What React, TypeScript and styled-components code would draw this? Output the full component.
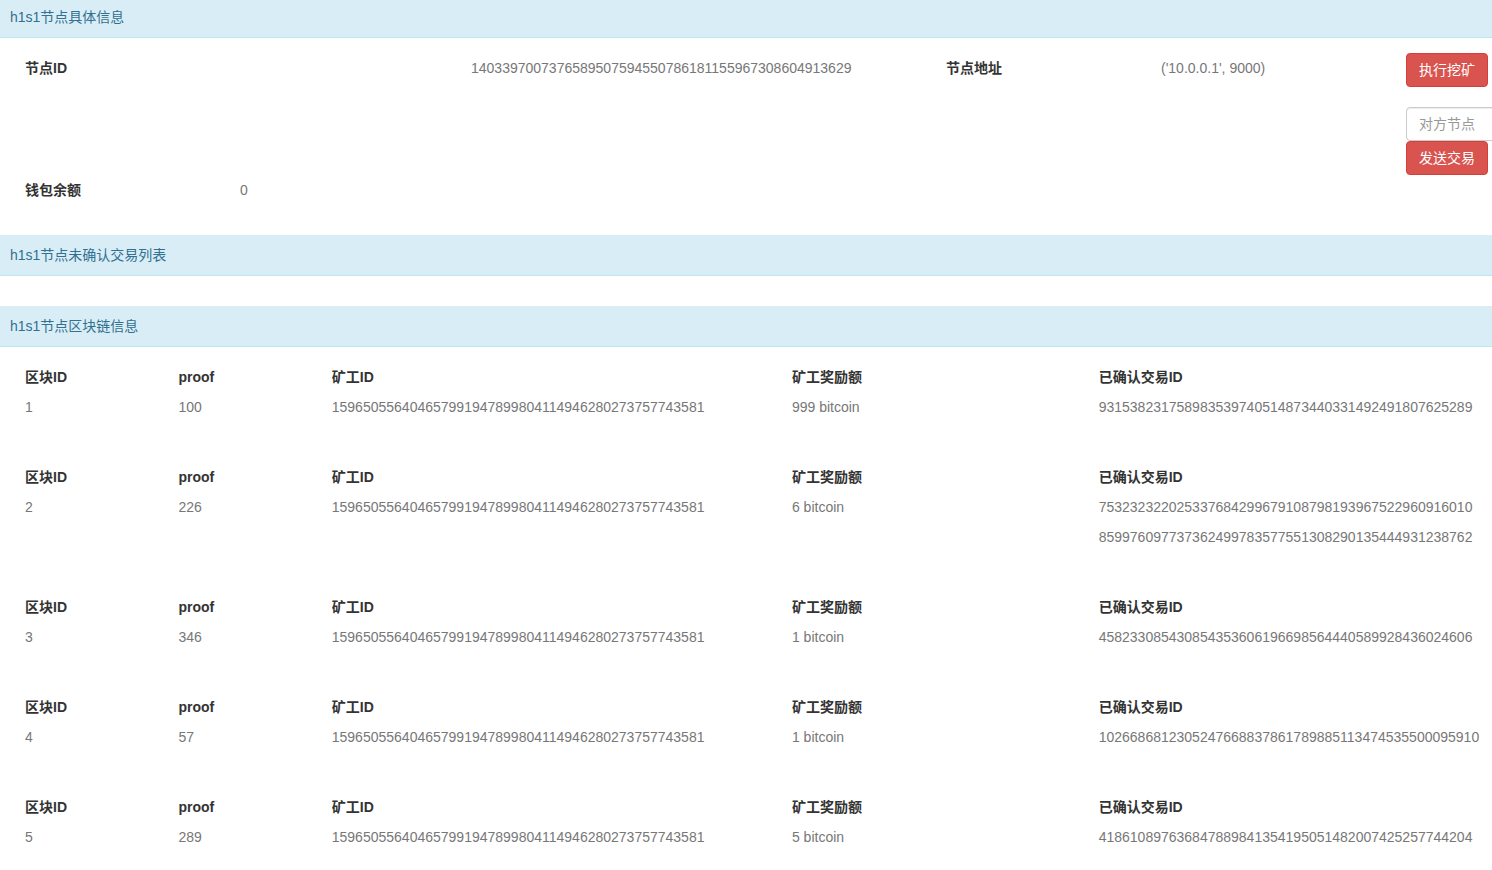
import React from "react";
import styled, { createGlobalStyle } from "styled-components";

const GlobalStyle = createGlobalStyle`
  * {
    box-sizing: border-box;
  }
  body {
    margin: 0;
    overflow-x: hidden;
    background: #fff;
    color: #333;
    font: 14px/20px "Liberation Sans", "Noto Sans CJK SC", sans-serif;
  }
`;

const Page = styled.main`
  overflow: hidden;
`;

const Panel = styled.section`
  margin-bottom: 30px;
`;

const PanelHeading = styled.h2<{ $first?: boolean }>`
  margin: 0;
  padding: ${(p) => (p.$first ? "7px" : "10px")} 10px 10px;
  border-bottom: 1px solid #bce8f1;
  background: #d9edf7;
  color: #31708f;
  font-size: 14px;
  font-weight: 400;
  line-height: 20px;
`;

const PanelBody = styled.div`
  padding: 15px 0 0 25px;
`;

const InfoRow = styled.div<{ $columns: string }>`
  display: grid;
  grid-template-columns: ${(p) => p.$columns};
`;

const Label = styled.div`
  padding: 5px 0;
  font-weight: 700;
`;

const Value = styled.div`
  padding: 5px 0;
  color: #777;
`;

const Actions = styled.div`
  display: flex;
  flex-direction: column;
  align-items: flex-start;
  gap: 20px;
  min-width: 0;
`;

const TradeForm = styled.form`
  display: flex;
  flex-direction: column;
  align-items: flex-start;
`;

const Button = styled.button`
  height: 34px;
  padding: 6px 12px;
  border: 1px solid #d43f3a;
  border-radius: 4px;
  background: #d9534f;
  color: #fff;
  font: inherit;
  white-space: nowrap;
  cursor: pointer;
`;

const TextInput = styled.input`
  width: 196px;
  height: 34px;
  padding: 6px 12px;
  border: 1px solid #ccc;
  border-radius: 4px;
  background: #fff;
  box-shadow: inset 0 1px 1px rgba(0, 0, 0, 0.075);
  color: #555;
  font: inherit;

  &::placeholder {
    color: #999;
    opacity: 1;
  }
`;

const ChainTable = styled.table`
  display: block;
`;

const Block = styled.tbody`
  display: block;
  margin-bottom: 40px;
`;

const BlockRow = styled.tr`
  display: grid;
  grid-template-columns:
    minmax(0, 39fr) minmax(0, 39fr) minmax(0, 117fr) minmax(0, 78fr)
    minmax(0, 100fr);
`;

const HeadCell = styled.th`
  padding: 5px 0;
  text-align: left;
  font-weight: 700;
`;

const Cell = styled.td`
  padding: 0;
  color: #777;
`;

const Line = styled.div`
  padding: 5px 0;
`;

const miner = "159650556404657991947899804114946280273757743581";

const blocks = [
  { id: 1, proof: 100, reward: 999, trades: ["931538231758983539740514873440331492491807625289"] },
  {
    id: 2,
    proof: 226,
    reward: 6,
    trades: [
      "753232322025337684299679108798193967522960916010",
      "859976097737362499783577551308290135444931238762",
    ],
  },
  { id: 3, proof: 346, reward: 1, trades: ["458233085430854353606196698564440589928436024606"] },
  { id: 4, proof: 57, reward: 1, trades: ["1026686812305247668837861789885113474535500095910"] },
  { id: 5, proof: 289, reward: 5, trades: ["418610897636847889841354195051482007425257744204"] },
];

const headings = ["区块ID", "proof", "矿工ID", "矿工奖励额", "已确认交易ID"];

export default function App() {
  return (
    <>
      <GlobalStyle />
      <Page lang="zh-CN">
        <Panel>
          <PanelHeading $first>h1s1节点具体信息</PanelHeading>
          <PanelBody>
            <InfoRow $columns="minmax(0, 446fr) minmax(0, 475fr) minmax(0, 215fr) minmax(0, 245fr) minmax(0, 86fr)">
              <Label>节点ID</Label>
              <Value>1403397007376589507594550786181155967308604913629</Value>
              <Label>节点地址</Label>
              <Value>('10.0.0.1', 9000)</Value>
              <Actions>
                <Button type="button">执行挖矿</Button>
                <TradeForm onSubmit={(e) => e.preventDefault()}>
                  <TextInput type="text" placeholder="对方节点" aria-label="对方节点" />
                  <Button type="submit">发送交易</Button>
                </TradeForm>
              </Actions>
            </InfoRow>
            <InfoRow $columns="minmax(0, 215fr) minmax(0, 1252fr)">
              <Label>钱包余额</Label>
              <Value>0</Value>
            </InfoRow>
          </PanelBody>
        </Panel>

        <Panel>
          <PanelHeading>h1s1节点未确认交易列表</PanelHeading>
        </Panel>

        <Panel>
          <PanelHeading>h1s1节点区块链信息</PanelHeading>
          <PanelBody>
            <ChainTable>
              {blocks.map((block) => (
                <Block key={block.id}>
                  <BlockRow>
                    {headings.map((heading) => (
                      <HeadCell key={heading} scope="col">
                        {heading}
                      </HeadCell>
                    ))}
                  </BlockRow>
                  <BlockRow>
                    <Cell>
                      <Line>{block.id}</Line>
                    </Cell>
                    <Cell>
                      <Line>{block.proof}</Line>
                    </Cell>
                    <Cell>
                      <Line>{miner}</Line>
                    </Cell>
                    <Cell>
                      <Line>{block.reward} bitcoin</Line>
                    </Cell>
                    <Cell>
                      {block.trades.map((trade) => (
                        <Line key={trade}>{trade}</Line>
                      ))}
                    </Cell>
                  </BlockRow>
                </Block>
              ))}
            </ChainTable>
          </PanelBody>
        </Panel>
      </Page>
    </>
  );
}
